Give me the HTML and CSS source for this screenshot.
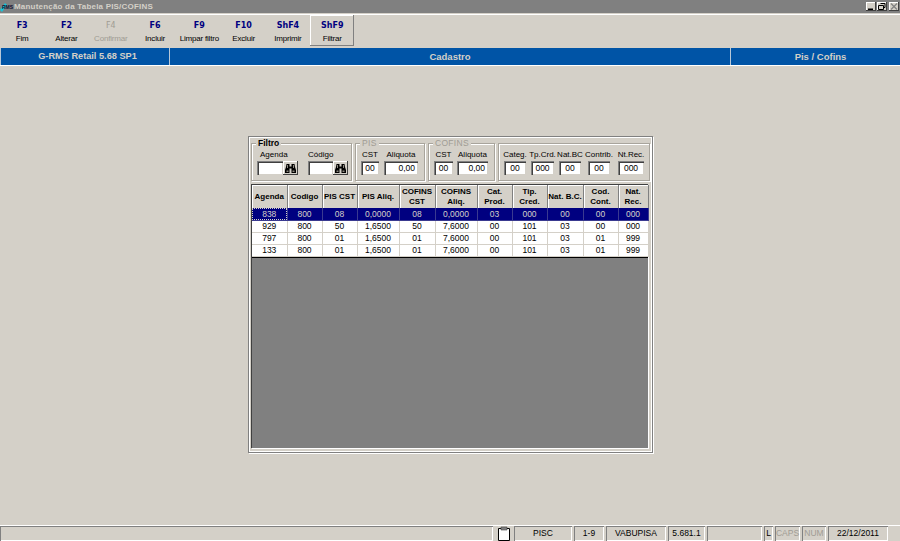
FILE: index.html
```html
<!DOCTYPE html>
<html>

<head>
    <meta charset="utf-8">
    <title>Manutenção da Tabela PIS/COFINS</title>
    <link rel="stylesheet" href="styles.css">
</head>

<body>
    <div class="titlebar">
        <svg class="titlebar__logo" width="14" height="13" viewBox="0 0 14 13">
            <path d="M0 10 L5 3 L7 5 L2 12 Z" fill="#19c4d8" />
            <text x="2" y="9" font-size="5" font-weight="bold" font-family="Liberation Sans" fill="#101030">RMS</text>
        </svg>
        <span class="titlebar__text">Manutenção da Tabela PIS/COFINS</span>
        <div class="titlebar__buttons">
            <span class="winbtn"><svg width="10" height="9" viewBox="0 0 10 9"><path d="M2 6.500h5v1.500h-5z" fill="#000" /></svg></span>
            <span class="winbtn"><svg width="10" height="9" viewBox="0 0 10 9"><path d="M3.500 1.500h4.500v4h-1.500M1.500 3.500h5v4h-5z" fill="none" stroke="#000" /></svg></span>
            <span class="winbtn winbtn--disabled"><svg width="10" height="9" viewBox="0 0 10 9"><path d="M2 1.500l6 6M8 1.500l-6 6" stroke="#808080" stroke-width="1.200" /></svg></span>
        </div>
    </div>

    <div class="toolbar">
        <div class="tool"><b>F3</b><span>Fim</span></div>
        <div class="tool"><b>F2</b><span>Alterar</span></div>
        <div class="tool tool--disabled"><b>F4</b><span>Confirmar</span></div>
        <div class="tool"><b>F6</b><span>Incluir</span></div>
        <div class="tool"><b>F9</b><span>Limpar filtro</span></div>
        <div class="tool"><b>F10</b><span>Excluir</span></div>
        <div class="tool"><b>ShF4</b><span>Imprimir</span></div>
        <div class="tool tool--raised"><b>ShF9</b><span>Filtrar</span></div>
    </div>

    <div class="infobar">
        <div class="infobar__cell infobar__cell--first">G-RMS Retail 5.68 SP1</div>
        <div class="infobar__cell infobar__cell--middle">Cadastro</div>
        <div class="infobar__cell infobar__cell--last">Pis / Cofins</div>
    </div>

    <main class="main">
        <div class="panel">
            <div class="filters">
                <div class="group group--filtro">
                    <span class="group__title group__title--dark">Filtro</span>
                    <div class="field field--search">
                        <label class="field__indent">Agenda</label>
                        <div class="search">
                            <span class="input input--fill"></span>
                            <span class="findbtn">
                                <svg width="11" height="10" viewBox="0 0 11 10">
                                    <path d="M1.500 1h3v2.500h2V1h3l.5 3 1 3v3H6.500V5.500h-2V10H0V7l1-3z" fill="#000" />
                                    <path d="M2 2h1v3H2zM8 2h1v3H8zM1.500 7.500h2V9h-2zM7.500 7.500h2V9h-2z" fill="#8c8880" />
                                </svg>
                            </span>
                        </div>
                    </div>
                    <div class="field field--search field--search-b">
                        <label>Código</label>
                        <div class="search">
                            <span class="input input--fill"></span>
                            <span class="findbtn">
                                <svg width="11" height="10" viewBox="0 0 11 10">
                                    <path d="M1.500 1h3v2.500h2V1h3l.5 3 1 3v3H6.500V5.500h-2V10H0V7l1-3z" fill="#000" />
                                    <path d="M2 2h1v3H2zM8 2h1v3H8zM1.500 7.500h2V9h-2zM7.500 7.500h2V9h-2z" fill="#8c8880" />
                                </svg>
                            </span>
                        </div>
                    </div>
                </div>

                <div class="group group--pis">
                    <span class="group__title">PIS</span>
                    <div class="field w18"><label>CST</label><span class="input">00</span></div>
                    <div class="field w34"><label>Aliquota</label><span class="input input--right">0,00</span></div>
                </div>

                <div class="group group--cofins">
                    <span class="group__title">COFINS</span>
                    <div class="field w19"><label>CST</label><span class="input">00</span></div>
                    <div class="field w31"><label>Aliquota</label><span class="input input--right">0,00</span></div>
                </div>

                <div class="group group--extra">
                    <div class="field w22"><label>Categ.</label><span class="input">00</span></div>
                    <div class="field w23"><label>Tp.Crd.</label><span class="input">000</span></div>
                    <div class="field w22"><label>Nat.BC</label><span class="input">00</span></div>
                    <div class="field w22 field--wide"><label>Contrib.</label><span class="input">00</span></div>
                    <div class="field w26 field--wider"><label>Nt.Rec.</label><span class="input">000</span></div>
                </div>
            </div>

            <div class="gridbox">
                <table class="grid">
                    <colgroup>
                        <col class="c35"><col class="c35"><col class="c35"><col class="c42"><col class="c36"><col class="c42">
                        <col class="c35"><col class="c35"><col class="c36"><col class="c35"><col class="c30">
                    </colgroup>
                    <thead>
                        <tr>
                            <th>Agenda</th><th>Codigo</th><th>PIS CST</th><th>PIS Aliq.</th><th>COFINS<br>CST</th><th>COFINS<br>Aliq.</th>
                            <th>Cat.<br>Prod.</th><th>Tip.<br>Cred.</th><th>Nat. B.C.</th><th>Cod.<br>Cont.</th><th>Nat.<br>Rec.</th>
                        </tr>
                    </thead>
                    <tbody>
                        <tr class="selected">
                            <td class="focused">838</td><td>800</td><td>08</td><td>0,0000</td><td>08</td><td>0,0000</td>
                            <td>03</td><td>000</td><td>00</td><td>00</td><td>000</td>
                        </tr>
                        <tr>
                            <td>929</td><td>800</td><td>50</td><td>1,6500</td><td>50</td><td>7,6000</td>
                            <td>00</td><td>101</td><td>03</td><td>00</td><td>000</td>
                        </tr>
                        <tr>
                            <td>797</td><td>800</td><td>01</td><td>1,6500</td><td>01</td><td>7,6000</td>
                            <td>00</td><td>101</td><td>03</td><td>01</td><td>999</td>
                        </tr>
                        <tr>
                            <td>133</td><td>800</td><td>01</td><td>1,6500</td><td>01</td><td>7,6000</td>
                            <td>00</td><td>101</td><td>03</td><td>01</td><td>999</td>
                        </tr>
                    </tbody>
                </table>
                <div class="grid__empty"></div>
            </div>
        </div>
    </main>

    <div class="statusbar">
        <div class="stat stat--grow"></div>
        <div class="stat stat--icon">
            <svg width="14" height="15" viewBox="0 0 14 15"><path d="M1.500 2.500h11v12h-11z" fill="#fff" stroke="#000" /><path d="M4 1h6v3H4z" fill="#808080" stroke="#404040" stroke-width=".6" /></svg>
        </div>
        <div class="stat stat--w58">PISC</div>
        <div class="stat stat--w30">1-9</div>
        <div class="stat stat--w60">VABUPISA</div>
        <div class="stat stat--w37">5.681.1</div>
        <div class="stat stat--w55"></div>
        <div class="stat stat--w9">L</div>
        <div class="stat stat--w25 stat--off">CAPS</div>
        <div class="stat stat--w24 stat--off">NUM</div>
        <div class="stat stat--w60">22/12/2011</div>
    </div>
</body>

</html>
```

FILE: styles.css
```css
body {
    --face: #d4d0c8;
    --shadow: #808080;
    margin: 0;
    height: 100vh;
    display: flex;
    flex-direction: column;
    overflow: hidden;
    font: 8px 'Liberation Sans', Arial, sans-serif;
    color: #000000;
    background: var(--face);
}

.titlebar {
    height: 13px;
    flex: none;
    display: flex;
    align-items: center;
    background: #808080;
}

.titlebar__logo {
    flex: none;
}

.titlebar__text {
    margin-left: 0;
    font-weight: bold;
    font-size: 8px;
    letter-spacing: 0.2px;
    color: #d4d0c8;
}

.titlebar__buttons {
    margin-left: auto;
    margin-right: 1px;
    display: flex;
    gap: 1px;
}

.winbtn {
    width: 10px;
    height: 9px;
    display: block;
    background: var(--face);
    box-shadow: inset -1px -1px #404040, inset 1px 1px #ffffff;
}

.winbtn svg {
    display: block;
}

.winbtn--disabled {
    margin-left: 1px;
}

.toolbar {
    height: 32px;
    margin-top: 1px;
    flex: none;
    display: flex;
    border-top: 1px solid #ffffff;
    box-sizing: border-box;
}

.tool {
    width: 44.3px;
    display: flex;
    flex-direction: column;
    align-items: center;
    padding-top: 5px;
    box-sizing: border-box;
    line-height: 11px;
    font-size: 8px;
    letter-spacing: -0.2px;
}

.tool b {
    margin-bottom: 2px;
    font-size: 8px;
    letter-spacing: 0;
    color: #000080;
    font-family: 'DejaVu Sans', sans-serif;
}

.tool--disabled,
.tool--disabled b {
    color: #a09c94;
    font-weight: normal;
}

.tool--raised {
    box-shadow: inset -1px -1px #808080, inset 1px 1px #ffffff;
}

.infobar {
    height: 17px;
    margin-top: 2px;
    flex: none;
    display: flex;
    border-bottom: 1px solid #ffffff;
    background: #0054a6;
    font-weight: bold;
    font-size: 9.5px;
    line-height: 17px;
    text-align: center;
    color: #d4d0c8;
}

.infobar__cell {
    box-sizing: border-box;
    border-right: 1px solid #b8c8d8;
}

.infobar__cell--first {
    width: 170px;
    padding-left: 5px;
    font-size: 9.2px;
    border-left: 1px solid #b8c8d8;
}

.infobar__cell--middle {
    width: 561px;
}

.infobar__cell--last {
    flex: 1;
    padding-left: 10px;
    border-right: none;
}

.main {
    flex: 1;
    min-height: 0;
    padding: 70px 0 0 248px;
}

.panel {
    width: 405px;
    height: 317px;
    box-sizing: border-box;
    padding: 7px 3px 0 3px;
    background: var(--face);
    box-shadow: inset 1px 1px #808080, inset -1px -1px #808080, inset 2px 2px #ffffff, inset -2px -2px #ffffff, 1px 1px #ffffff;
}

.filters {
    height: 38px;
    display: flex;
    gap: 3px;
}

.group {
    position: relative;
    height: 38px;
    padding: 5px 0 0 5px;
    display: flex;
    gap: 5px;
    box-sizing: border-box;
    border: 1px solid #a8a49c;
    box-shadow: inset 1px 1px #ffffff, 1px 1px #ffffff;
}

.group__title {
    position: absolute;
    top: -6px;
    left: 4px;
    padding: 0 2px;
    height: 10px;
    line-height: 10px;
    font-size: 8.500px;
    color: #a09c94;
    letter-spacing: 0.3px;
    background: var(--face);
}

.group__title--dark {
    font-weight: bold;
    color: #000000;
    letter-spacing: 0;
}

.group--filtro {
    width: 101px;
    gap: 10px;
}

.group--pis {
    width: 70px;
}

.group--cofins {
    width: 67px;
    gap: 4px;
}

.group--extra {
    width: 152px;
    gap: 5px;
}

.field {
    display: flex;
    flex-direction: column;
    align-items: center;
    line-height: 12px;
}

.field label {
    height: 12px;
    white-space: nowrap;
}

.field--wide {
    margin-left: 2px;
}

.field--wider {
    margin-left: 3px;
}

.field--search {
    width: 41px;
    align-items: flex-start;
}

.field--search-b {
    width: 40px;
}

.field__indent {
    padding-left: 3px;
}

.w18 { width: 18px; }
.w19 { width: 19px; }
.w22 { width: 22px; }
.w23 { width: 23px; }
.w26 { width: 26px; }
.w31 { width: 31px; }
.w34 { width: 34px; }

.search {
    width: 100%;
    display: flex;
}

.input {
    display: block;
    width: 100%;
    height: 14px;
    box-sizing: border-box;
    padding: 0 3px;
    background: #ffffff;
    box-shadow: inset 1px 1px #808080, inset 2px 2px #404040, inset -1px -1px var(--face);
    font-size: 8.500px;
    line-height: 15px;
    text-align: center;
}

.input--right {
    text-align: right;
}

.input--fill {
    flex: 1;
    width: auto;
}

.findbtn {
    width: 15px;
    height: 14px;
    display: flex;
    align-items: center;
    justify-content: center;
    background: var(--face);
    box-shadow: inset -1px -1px #404040, inset 1px 1px #ffffff;
}

.gridbox {
    width: 397px;
    height: 264px;
    margin-top: 3px;
    display: flex;
    flex-direction: column;
    box-sizing: border-box;
    border-top: 1px solid #404040;
    border-left: 1px solid #404040;
    background: #808080;
    box-shadow: 1px 1px #ffffff;
}

.grid {
    width: 396px;
    table-layout: fixed;
    border-collapse: collapse;
    flex: none;
}

.c30 { width: 30px; }
.c35 { width: 35px; }
.c36 { width: 36px; }
.c42 { width: 42px; }

.grid th {
    height: 23px;
    padding: 0;
    border-right: 1px solid #808080;
    background: var(--face);
    box-shadow: inset 1px 1px #ffffff;
    font-size: 8px;
    line-height: 10px;
    white-space: nowrap;
}

.grid td {
    height: 12px;
    padding: 0;
    box-sizing: border-box;
    border-right: 1px solid #d4d0c8;
    border-bottom: 1px solid #d4d0c8;
    background: #ffffff;
    font-size: 8.500px;
    line-height: 10px;
    text-align: center;
}

.grid .selected td {
    background: #000080;
    color: #d4d0c8;
    border-color: #3a3a90;
}

.grid .selected .focused {
    outline: 1px dotted #d4d0c8;
    outline-offset: -1px;
}

.grid__empty {
    flex: 1;
    border-top: 1px solid #000000;
}

.statusbar {
    height: 16px;
    flex: none;
    display: flex;
    gap: 2px;
    box-sizing: border-box;
    padding-right: 12px;
    border-top: 1px solid #ffffff;
    font-size: 8.500px;
    line-height: 15px;
    text-align: center;
}

.stat {
    box-sizing: border-box;
    height: 15px;
    box-shadow: inset 1px 1px #808080, inset -1px -1px #ffffff;
}

.stat--grow { flex: 1; }
.stat--icon { width: 17px; box-shadow: none; }
.stat--w9 { width: 9px; }
.stat--w24 { width: 24px; }
.stat--w25 { width: 25px; }
.stat--w30 { width: 30px; }
.stat--w37 { width: 37px; }
.stat--w55 { width: 55px; }
.stat--w58 { width: 58px; }
.stat--w60 { width: 60px; }

.stat--off {
    color: #a09c94;
}
```
